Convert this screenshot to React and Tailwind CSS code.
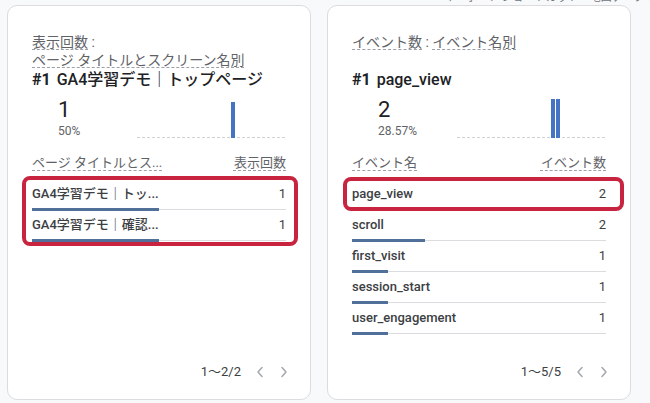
const rowsLeft = [
  { name: "GA4学習デモ｜トッ...", value: "1", pct: 50 },
  { name: "GA4学習デモ｜確認...", value: "1", pct: 50 },
];

const rowsRight = [
  { name: "page_view", value: "2", pct: 28.57 },
  { name: "scroll", value: "2", pct: 28.57 },
  { name: "first_visit", value: "1", pct: 14.29 },
  { name: "session_start", value: "1", pct: 14.29 },
  { name: "user_engagement", value: "1", pct: 14.29 },
];

function Dashed({ children, offset = "underline-offset-[3px]" }) {
  return (
    <span
      className={`underline decoration-dashed decoration-[#9aa0a6] decoration-1 [text-decoration-skip-ink:none] ${offset}`}
    >
      {children}
    </span>
  );
}

function Chevron({ dir }) {
  return (
    <svg width="8" height="12" viewBox="0 0 8 12" className="block">
      <path
        d={dir === "left" ? "M6 1.5 L2 6 L6 10.5" : "M2 1.5 L6 6 L2 10.5"}
        fill="none"
        stroke="#a3a7ab"
        strokeWidth="1.5"
        strokeLinecap="round"
        strokeLinejoin="round"
      />
    </svg>
  );
}

function MiniChart({ bars }) {
  return (
    <svg width="149" height="42" viewBox="0 0 149 42" className="block">
      <line x1="0" y1="40.5" x2="149" y2="40.5" stroke="#cfd2d6" strokeWidth="1" strokeDasharray="3 2" />
      {bars.map((b, i) => (
        <rect key={i} x={b.x} y={b.y} width={b.w} height={41 - b.y} fill="#4674c4" />
      ))}
    </svg>
  );
}

function Row({ row }) {
  return (
    <div className="flex flex-col">
      <div className="flex justify-between text-[13px] leading-[18px] text-[#3c4043]">
        <span className="font-medium">{row.name}</span>
        <span>{row.value}</span>
      </div>
      <div className="mt-[5px] mb-[5px] h-[3px] flex items-center">
        <div className="h-[3px] bg-[#50709a]" style={{ width: `${row.pct}%` }} />
        <div className="flex-1 h-px bg-[#dadce0]" />
      </div>
    </div>
  );
}

function Card({ title, top, value, pct, bars, headL, headR, rows, pager, box }) {
  return (
    <div className="relative w-[304px] h-[395px] shrink-0 bg-white border border-[#dadce0] rounded-[10px] px-[24px] pt-[27px] flex flex-col">
      <div className="h-[37px] text-[14px] leading-[18px] text-[#5f6368]">{title}</div>
      <div className="text-[16px] leading-[20px] text-[#202124] font-medium whitespace-nowrap">
        <span className="font-bold">#1</span>
        <span className="ml-[6px]">{top}</span>
      </div>
      <div className="mt-[7px] flex items-end">
        <div className="pl-[26px] flex flex-col">
          <div className="text-[22px] leading-[26px] text-[#202124]">{value}</div>
          <div className="text-[12px] leading-[16px] text-[#5f6368]">{pct}</div>
        </div>
        <div className="ml-auto">
          <MiniChart bars={bars} />
        </div>
      </div>
      <div className="mt-[15px] flex justify-between text-[13px] leading-[18px] text-[#5f6368]">
        <Dashed>{headL}</Dashed>
        <Dashed>{headR}</Dashed>
      </div>
      <div className="mt-[13px] flex flex-col">
        {rows.map((r, i) => (
          <Row key={i} row={r} />
        ))}
      </div>
      <div className="mt-auto pb-[18px] flex justify-end items-center">
        <span className="text-[13px] leading-[18px] text-[#3c4043]">{pager}</span>
        <span className="ml-[15px]">
          <Chevron dir="left" />
        </span>
        <span className="ml-[16px] -mr-[2px]">
          <Chevron dir="right" />
        </span>
      </div>
      <div
        className="absolute border-[4px] border-[#c9243f] rounded-[8px] pointer-events-none"
        style={box}
      />
    </div>
  );
}

export default function App() {
  return (
    <div className="w-[650px] h-[403px] overflow-hidden bg-[#f8f9fa] font-['Roboto','Noto_Sans_CJK_JP',sans-serif]">
      <div className="h-[5px] overflow-hidden pl-[444px]">
        <div className="-mt-[9px] text-[11px] leading-[13px] text-[#70757a] whitespace-nowrap">
          キーボード ショートカット　地図データ ©2025
        </div>
      </div>
      <div className="flex gap-[16px] pl-[7px]">
        <Card
          title={
            <>
              <div>
                <Dashed offset="underline-offset-[2px]">表示回数</Dashed> :
              </div>
              <div>
                <Dashed offset="underline-offset-[2px]">ページ タイトルとスクリーン名別</Dashed>
              </div>
            </>
          }
          top="GA4学習デモ｜トップページ"
          value="1"
          pct="50%"
          bars={[{ x: 94, y: 5, w: 4 }]}
          headL="ページ タイトルとス..."
          headR="表示回数"
          rows={rowsLeft}
          pager="1〜2/2"
          box={{ left: 14, top: 170, width: 276, height: 70 }}
        />
        <Card
          title={
            <div>
              <Dashed offset="underline-offset-[2px]">イベント数</Dashed> :{" "}
              <Dashed offset="underline-offset-[2px]">イベント名別</Dashed>
            </div>
          }
          top="page_view"
          value="2"
          pct="28.57%"
          bars={[
            { x: 94, y: 2, w: 4 },
            { x: 99, y: 2, w: 4 },
          ]}
          headL="イベント名"
          headR="イベント数"
          rows={rowsRight}
          pager="1〜5/5"
          box={{ left: 15, top: 171, width: 281, height: 34 }}
        />
      </div>
    </div>
  );
}
